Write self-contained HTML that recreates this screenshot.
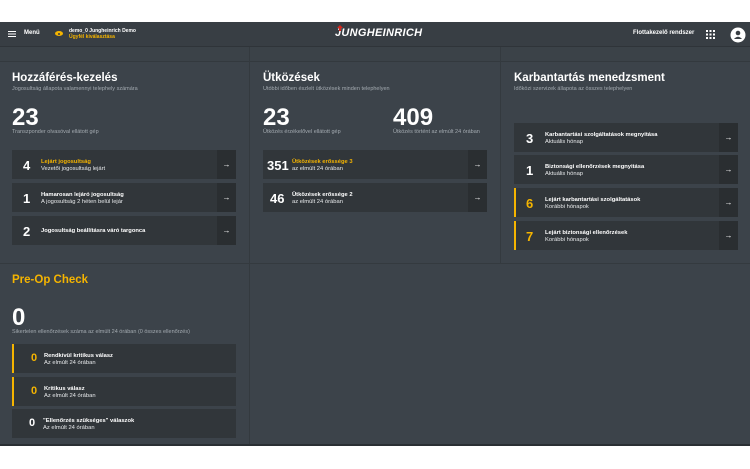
<!DOCTYPE html>
<html><head><meta charset="utf-8"><style>
*{margin:0;padding:0;box-sizing:border-box}
body{width:750px;height:469px;background:#fff;font-family:"Liberation Sans",sans-serif;position:relative;overflow:hidden;color:#fff}
.abs{position:absolute}
.hdr{left:0;top:22px;width:750px;height:25px;background:#383e44;border-bottom:1px solid #2f3439}
.sub{left:0;top:47px;width:750px;height:15px;background:#3b4248;border-bottom:1px solid #33393e}
.main{left:0;top:62px;width:750px;height:383px;background:#3c434a}
.vl{width:1px;background:#343a3f}
.hl{height:1px;background:#343a3f}
.t{font-size:11.5px;font-weight:bold}
.s{font-size:5.5px;color:#a3aab0}
.big{font-size:24px;font-weight:bold;line-height:1}
.card{position:absolute;background:#31363a;height:29px}
.card .n{position:absolute;font-weight:bold;font-size:13px;top:8px}
.card .l1{position:absolute;font-size:5.8px;font-weight:bold;top:9px}
.card .l2{position:absolute;font-size:5.8px;top:16px;color:#e6e8ea}
.card .ar{position:absolute;right:0;top:0;width:19px;height:29px;background:#2a2e31;font-size:8px;font-weight:bold;text-align:center;line-height:29px}
.y{color:#f5b400}
.yb{border-left:2px solid #f5b400}
</style></head><body>
<div class="abs hdr"></div>
<div class="abs" style="left:8px;top:31px;width:8px;height:1.3px;background:#fff;box-shadow:0 2.5px 0 #fff,0 5px 0 #fff"></div>
<div class="abs" style="left:24px;top:30px;font-size:6px;font-weight:bold">Menü</div>
<div class="abs" style="left:55px;top:31px;width:8px;height:5px;border-radius:50%;background:#f5b400"></div>
<div class="abs" style="left:58px;top:32.5px;width:2px;height:2px;border-radius:50%;background:#383e44"></div>
<div class="abs" style="left:69px;top:28px;font-size:5px;font-weight:bold;line-height:6px">demo_0 Jungheinrich Demo<br><span class="y">Ügyfél kiválasztása</span></div>
<div class="abs" style="left:335px;top:27px;font-size:11px;font-weight:bold;font-style:italic;color:#fff;letter-spacing:0.3px">JUNGHEINRICH</div>
<svg class="abs" style="left:337px;top:25px" width="6" height="6"><path d="M3 0 L6 3 H4 V6 H2 V3 H0Z" fill="#d9261c"/></svg>
<div class="abs" style="left:633px;top:30px;font-size:6px;font-weight:bold">Flottakezelő rendszer</div>
<svg class="abs" style="left:706px;top:30px" width="10" height="10"><g fill="#fff"><rect x="0" y="0" width="2" height="2"/><rect x="3.5" y="0" width="2" height="2"/><rect x="7" y="0" width="2" height="2"/><rect x="0" y="3.5" width="2" height="2"/><rect x="3.5" y="3.5" width="2" height="2"/><rect x="7" y="3.5" width="2" height="2"/><rect x="0" y="7" width="2" height="2"/><rect x="3.5" y="7" width="2" height="2"/><rect x="7" y="7" width="2" height="2"/></g></svg>
<svg class="abs" style="left:730px;top:27px" width="16" height="16"><circle cx="8" cy="8" r="7.5" fill="#fff"/><circle cx="8" cy="6" r="2.3" fill="#383e44"/><path d="M4 12 Q8 7.5 12 12Z" fill="#383e44"/></svg>
<div class="abs sub"></div>
<div class="abs main"></div>
<div class="abs vl" style="left:249px;top:47px;height:398px"></div>
<div class="abs vl" style="left:500px;top:47px;height:216px"></div>
<div class="abs hl" style="left:0;top:263px;width:750px"></div>
<div class="abs" style="left:0;top:444px;width:750px;height:1.5px;background:#2a2f33"></div>

<div class="abs t" style="left:12px;top:72px">Hozzáférés-kezelés</div>
<div class="abs s" style="left:12px;top:86px">Jogosultság állapota valamennyi telephely számára</div>
<div class="abs big" style="left:12px;top:106px">23</div>
<div class="abs s" style="left:12px;top:129px">Transzponder olvasóval ellátott gép</div>
<div class="card" style="left:12px;top:150px;width:224px"><span class="n" style="left:11px">4</span><span class="l1 y" style="left:29px">Lejárt jogosultság</span><span class="l2" style="left:29px">Vezetői jogosultság lejárt</span><span class="ar">→</span></div>
<div class="card" style="left:12px;top:183px;width:224px"><span class="n" style="left:11px">1</span><span class="l1" style="left:29px">Hamarosan lejáró jogosultság</span><span class="l2" style="left:29px">A jogosultság 2 héten belül lejár</span><span class="ar">→</span></div>
<div class="card" style="left:12px;top:216px;width:224px"><span class="n" style="left:11px">2</span><span class="l1" style="left:29px;top:12px">Jogosultság beállításra váró targonca</span><span class="ar">→</span></div>

<div class="abs t" style="left:263px;top:72px">Ütközések</div>
<div class="abs s" style="left:263px;top:86px">Utóbbi időben észlelt ütközések minden telephelyen</div>
<div class="abs big" style="left:263px;top:106px">23</div>
<div class="abs s" style="left:263px;top:129px">Ütközés érzékelővel ellátott gép</div>
<div class="abs big" style="left:393px;top:106px">409</div>
<div class="abs s" style="left:393px;top:129px">Ütközés történt az elmúlt 24 órában</div>
<div class="card" style="left:263px;top:150px;width:224px"><span class="n" style="left:4px">351</span><span class="l1 y" style="left:29px">Ütközések erőssége 3</span><span class="l2" style="left:29px">az elmúlt 24 órában</span><span class="ar">→</span></div>
<div class="card" style="left:263px;top:183px;width:224px"><span class="n" style="left:7px">46</span><span class="l1" style="left:29px">Ütközések erőssége 2</span><span class="l2" style="left:29px">az elmúlt 24 órában</span><span class="ar">→</span></div>

<div class="abs t" style="left:514px;top:72px">Karbantartás menedzsment</div>
<div class="abs s" style="left:514px;top:86px">Időközi szervizek állapota az összes telephelyen</div>
<div class="card" style="left:514px;top:123px;width:224px"><span class="n" style="left:12px">3</span><span class="l1" style="left:31px">Karbantartási szolgáltatások megnyitása</span><span class="l2" style="left:31px">Aktuális hónap</span><span class="ar">→</span></div>
<div class="card" style="left:514px;top:155px;width:224px"><span class="n" style="left:12px">1</span><span class="l1" style="left:31px">Biztonsági ellenőrzések megnyitása</span><span class="l2" style="left:31px">Aktuális hónap</span><span class="ar">→</span></div>
<div class="card yb" style="left:514px;top:188px;width:224px"><span class="n y" style="left:10px">6</span><span class="l1" style="left:29px">Lejárt karbantartási szolgáltatások</span><span class="l2" style="left:29px">Korábbi hónapok</span><span class="ar">→</span></div>
<div class="card yb" style="left:514px;top:221px;width:224px"><span class="n y" style="left:10px">7</span><span class="l1" style="left:29px">Lejárt biztonsági ellenőrzések</span><span class="l2" style="left:29px">Korábbi hónapok</span><span class="ar">→</span></div>

<div class="abs t y" style="left:12px;top:274px">Pre-Op Check</div>
<div class="abs big" style="left:12px;top:306px">0</div>
<div class="abs s" style="left:12px;top:329px">Sikertelen ellenőrzések száma az elmúlt 24 órában (0 összes ellenőrzés)</div>
<div class="card yb" style="left:12px;top:344px;width:224px"><span class="n y" style="left:17px;font-size:11px">0</span><span class="l1" style="left:30px">Rendkívül kritikus válasz</span><span class="l2" style="left:30px">Az elmúlt 24 órában</span></div>
<div class="card yb" style="left:12px;top:377px;width:224px"><span class="n y" style="left:17px;font-size:11px">0</span><span class="l1" style="left:30px">Kritikus válasz</span><span class="l2" style="left:30px">Az elmúlt 24 órában</span></div>
<div class="card" style="left:12px;top:409px;width:224px"><span class="n" style="left:17px;font-size:11px">0</span><span class="l1" style="left:31px">"Ellenőrzés szükséges" válaszok</span><span class="l2" style="left:31px">Az elmúlt 24 órában</span></div>
</body></html>
